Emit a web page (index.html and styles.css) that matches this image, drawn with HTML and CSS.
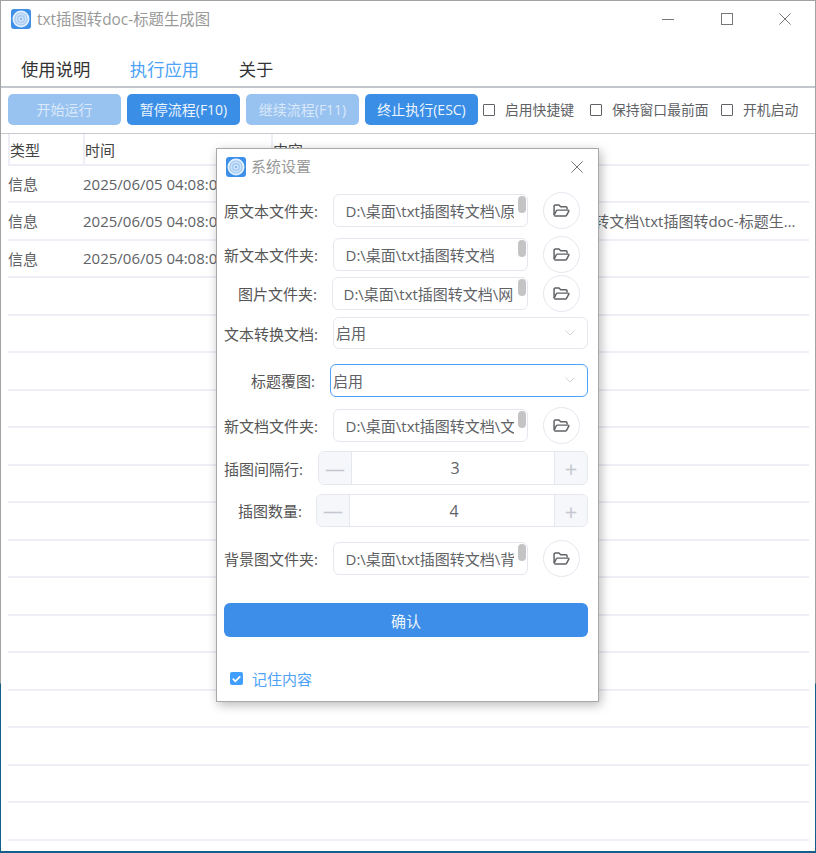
FILE: index.html
```html
<!DOCTYPE html>
<html lang="zh-CN">
<head>
<meta charset="utf-8">
<title>txt插图转doc-标题生成图</title>
<link rel="stylesheet" href="styles.css">
</head>
<body>
<svg class="defs" width="0" height="0" aria-hidden="true">
  <symbol id="logo" viewBox="0 0 20 20">
    <rect width="20" height="20" rx="3" fill="#3d8fe8"/>
    <circle cx="10" cy="10" r="8.5" fill="#e3f0fd"/>
    <circle cx="10" cy="10" r="6.8" fill="#a9cdf3"/>
    <circle cx="10" cy="10" r="5.4" fill="#cfe2f9"/>
    <circle cx="10" cy="10" r="4" fill="#a3c9f3"/>
    <circle cx="10" cy="10" r="2.6" fill="#d9e9fb"/>
    <circle cx="10" cy="10" r="1.2" fill="#7fb5f0"/>
  </symbol>
  <symbol id="folder" viewBox="0 0 18 14">
    <path d="M1 12.2V2.4C1 1.6 1.6 1 2.4 1h3.8l2 2h5.4c.8 0 1.4.6 1.4 1.4V6" fill="none" stroke="#606266" stroke-width="1.6"/>
    <path d="M1.3 13h11.9c.5 0 1-.3 1.2-.7L16.9 7.6c.2-.5-.1-1-.7-1H4.6c-.5 0-1 .3-1.2.7L1 12.2" fill="none" stroke="#606266" stroke-width="1.6" stroke-linejoin="round"/>
  </symbol>
  <symbol id="chev" viewBox="0 0 10 6">
    <path d="M.5.5L5 5 9.5.5" fill="none" stroke="#d3d5db" stroke-width="1"/>
  </symbol>
  <symbol id="cross" viewBox="0 0 12 12">
    <path d="M.4.4l11.2 11.2M11.6.4L.4 11.6" fill="none" stroke="#777" stroke-width="1"/>
  </symbol>
</svg>

<div class="window">
  <header class="titlebar">
    <svg class="logo"><use href="#logo"/></svg>
    <span class="app-title">txt插图转doc-标题生成图</span>
    <div class="win-controls">
      <span class="win-btn"><i class="win-min"></i></span>
      <span class="win-btn"><i class="win-max"></i></span>
      <span class="win-btn"><svg class="icon-x"><use href="#cross"/></svg></span>
    </div>
  </header>

  <nav class="tabs">
    <a class="tab">使用说明</a>
    <a class="tab tab-active">执行应用</a>
    <a class="tab">关于</a>
  </nav>

  <div class="toolbar">
    <button class="btn btn-off">开始运行</button>
    <button class="btn">暂停流程(F10)</button>
    <button class="btn btn-off">继续流程(F11)</button>
    <button class="btn">终止执行(ESC)</button>
    <label class="tool-check tc-a"><i class="box"></i>启用快捷键</label>
    <label class="tool-check tc-b"><i class="box"></i>保持窗口最前面</label>
    <label class="tool-check tc-c"><i class="box"></i>开机启动</label>
  </div>

  <div class="table">
    <div class="thead">
      <div class="th th-type">类型</div>
      <div class="th th-time">时间</div>
      <div class="th th-text">内容</div>
    </div>
    <div class="tr"><span class="td-type">信息</span><span class="td-time">2025/06/05 04:08:09</span><span class="td-text">程序启动完成</span></div>
    <div class="tr"><span class="td-type">信息</span><span class="td-time">2025/06/05 04:08:09</span><span class="td-text">读取配置文件，当前运行目录：D:\桌面\txt插图转文档\txt插图转doc-标题生成图\config.json</span></div>
    <div class="tr"><span class="td-type">信息</span><span class="td-time">2025/06/05 04:08:09</span><span class="td-text">读取配置完成</span></div>
    <div class="tr"></div><div class="tr"></div><div class="tr"></div><div class="tr"></div><div class="tr"></div>
    <div class="tr"></div><div class="tr"></div><div class="tr"></div><div class="tr"></div><div class="tr"></div>
    <div class="tr"></div><div class="tr"></div><div class="tr"></div><div class="tr"></div><div class="tr"></div>
  </div>
</div>

<section class="dialog">
  <header class="dlg-head">
    <svg class="logo"><use href="#logo"/></svg>
    <span class="dlg-title">系统设置</span>
    <svg class="icon-x dlg-close"><use href="#cross"/></svg>
  </header>

  <div class="row">
    <label class="lab">原文本文件夹:</label>
    <div class="path"><span class="path-text">D:\桌面\txt插图转文档\原文本</span><i class="thumb"></i></div>
    <button class="pick"><svg class="icon-folder"><use href="#folder"/></svg></button>
  </div>
  <div class="row mt-11">
    <label class="lab">新文本文件夹:</label>
    <div class="path"><span class="path-text">D:\桌面\txt插图转文档</span><i class="thumb"></i></div>
    <button class="pick"><svg class="icon-folder"><use href="#folder"/></svg></button>
  </div>
  <div class="row mt-6">
    <label class="lab lab-img">图片文件夹:</label>
    <div class="path"><span class="path-text">D:\桌面\txt插图转文档\网络图片</span><i class="thumb"></i></div>
    <button class="pick"><svg class="icon-folder"><use href="#folder"/></svg></button>
  </div>
  <div class="row mt-7 row-32">
    <label class="lab">文本转换文档:</label>
    <div class="select"><span>启用</span><svg class="icon-chev"><use href="#chev"/></svg></div>
  </div>
  <div class="row mt-15">
    <label class="lab lab-cover">标题覆图:</label>
    <div class="select select-focus"><span>启用</span><svg class="icon-chev"><use href="#chev"/></svg></div>
  </div>
  <div class="row mt-12">
    <label class="lab">新文档文件夹:</label>
    <div class="path"><span class="path-text">D:\桌面\txt插图转文档\文档</span><i class="thumb"></i></div>
    <button class="pick"><svg class="icon-folder"><use href="#folder"/></svg></button>
  </div>
  <div class="row mt-9 row-34">
    <label class="lab lab-gap">插图间隔行:</label>
    <div class="stepper"><span class="step">—</span><span class="step-val">3</span><span class="step step-plus">+</span></div>
  </div>
  <div class="row mt-9">
    <label class="lab lab-count">插图数量:</label>
    <div class="stepper stepper-wide"><span class="step">—</span><span class="step-val">4</span><span class="step step-plus">+</span></div>
  </div>
  <div class="row mt-15">
    <label class="lab">背景图文件夹:</label>
    <div class="path"><span class="path-text">D:\桌面\txt插图转文档\背景图</span><i class="thumb"></i></div>
    <button class="pick"><svg class="icon-folder"><use href="#folder"/></svg></button>
  </div>

  <button class="confirm">确认</button>

  <label class="remember">
    <i class="checked"><svg viewBox="0 0 14 14" class="icon-check"><path d="M3 7.2l2.8 2.8L11 4.6" fill="none" stroke="#fff" stroke-width="2"/></svg></i>记住内容
  </label>
</section>
</body>
</html>
```

FILE: styles.css
```css
* { box-sizing: border-box; }

html, body { margin: 0; height: 100%; }

body {
  position: relative;
  overflow: hidden;
  padding: 1px 1px 2px 1px;
  background: linear-gradient(#a3a3a3 0, #a3a3a3 683px, #12608a 684px, #12608a 100%);
  font-family: "Open Sans", "Noto Sans CJK SC", sans-serif;
  font-size: 15px;
  color: #606266;
}

.defs { position: absolute; }

i { display: block; font-style: normal; }

.window {
  height: 100%;
  background: #fff;
  display: flex;
  flex-direction: column;
  overflow: hidden;
}

/* title bar */
.titlebar {
  flex: 0 0 39px;
  display: flex;
  align-items: center;
  padding: 0 0 3px 10px;
}

.logo { width: 20px; height: 20px; flex: none; }

.app-title {
  margin-left: 6px;
  padding-bottom: 2px;
  font-size: 15.4px;
  color: #999;
  white-space: nowrap;
}

.win-controls {
  margin-left: auto;
  display: flex;
  margin-right: 24px;
  gap: 46.5px;
  align-items: center;
}

.win-btn { width: 12px; height: 12px; display: flex; align-items: center; }
.win-min { width: 12px; height: 1px; background: #777; }
.win-max { width: 12px; height: 12px; border: 1px solid #777; }
.icon-x { width: 12px; height: 12px; display: block; }

/* tabs */
.tabs {
  flex: 0 0 48px;
  display: flex;
  align-items: center;
  gap: 39.5px;
  padding: 10px 0 0 20px;
  border-bottom: 2px solid #c4c6ce;
  font-size: 17.33px;
  color: #333;
}

.tab-active { color: #4ea2f7; }

/* toolbar */
.toolbar {
  flex: 0 0 46px;
  display: flex;
  align-items: center;
  padding: 0 0 2px 7px;
  gap: 6px;
  border-bottom: 1px solid #c8cad0;
}

.btn {
  width: 113px;
  height: 31px;
  padding: 0 0 2px;
  border: 1px solid #409eff00;
  border-radius: 5px;
  background: #3a8ee6;
  color: #eef5fd;
  font: inherit;
  font-size: 14px;
}

.btn-off { background: #98c2f0; color: #d9e8fa; }

.tool-check {
  display: flex;
  align-items: center;
  padding-bottom: 2px;
  font-size: 13.8px;
  color: #606266;
  white-space: nowrap;
}

.tc-a { margin-left: -1px; }
.tc-b { margin-left: 10px; }
.tc-c { margin-left: 6.5px; }

.box {
  width: 12px;
  height: 12px;
  margin: 3px 10px 0 0;
  border: 1.5px solid #5f6266;
  border-radius: 1px;
}

/* table */
.table {
  flex: 1;
  margin: 0 6px 0 7px;
  overflow: hidden;
}

.thead {
  height: 32px;
  display: flex;
  border-bottom: 2px solid #edeef6;
  color: #444;
}

.th {
  display: flex;
  align-items: center;
  padding-top: 1px;
  border-left: 2px solid #edeef6;
}

.th-type { width: 75px; }
.th-time { width: 188px; }
.th-text { flex: 1; }

.tr {
  height: 37.5px;
  display: flex;
  align-items: center;
  border-bottom: 2px solid #edeef6;
  white-space: nowrap;
}

.tr:nth-child(2) { height: 37px; }

.td-type { width: 75px; flex: none; }
.td-time { width: 189px; flex: none; }
.td-text {
  flex: 1;
  min-width: 0;
  padding: 0 4px 0 8px;
  overflow: hidden;
  text-overflow: ellipsis;
}

/* dialog */
.dialog {
  position: absolute;
  left: 216px;
  top: 148px;
  width: 383px;
  height: 554px;
  padding: 0 10px 0 7px;
  background: #fff;
  border: 1px solid #a8a8a8;
  box-shadow: 2px 3px 10px rgba(0, 0, 0, .28);
}

.dlg-head {
  height: 45px;
  display: flex;
  align-items: center;
  padding: 0 0 10px 2px;
}

.dlg-title { margin-left: 5px; padding-bottom: 2px; color: #999; }
.dlg-close { margin-left: auto; margin-right: 5px; }

.row { display: flex; align-items: center; height: 33px; }
.row-32 { height: 32px; }
.row-34 { height: 34px; }

.mt-6 { margin-top: 6px; }
.mt-7 { margin-top: 7px; }
.mt-9 { margin-top: 9px; }
.mt-11 { margin-top: 11px; }
.mt-12 { margin-top: 12px; }
.mt-15 { margin-top: 15px; }

.lab {
  flex: 0 0 109px;
  white-space: nowrap;
  color: #555;
}

.lab-img { flex-basis: 108px; padding-left: 14px; }
.lab-cover { flex-basis: 106px; padding-left: 27px; }
.lab-gap { flex-basis: 94px; }
.lab-count { flex-basis: 92px; padding-left: 14px; }

.path {
  position: relative;
  flex: 1;
  max-width: 195px;
  height: 100%;
  padding: 0 13px 0 11.5px;
  display: flex;
  align-items: center;
  border: 1.5px solid #e4e7ed;
  border-radius: 6px;
  overflow: hidden;
}

.lab-img + .path { max-width: 196px; padding: 0 14.5px 0 10.5px; }

.path-text { white-space: nowrap; overflow: hidden; }

.thumb {
  position: absolute;
  right: 1px;
  top: 1px;
  width: 8px;
  height: 17px;
  border-radius: 4px;
  background: #c4c4c4;
}

.pick {
  flex: none;
  width: 37px;
  height: 37px;
  margin: -2px 0 -2px 15px;
  padding: 0;
  display: flex;
  align-items: center;
  justify-content: center;
  background: #fff;
  border: 1.5px solid #e4e7ed;
  border-radius: 50%;
}

.icon-folder { width: 17px; height: 13px; display: block; }

.select {
  flex: 1;
  height: 100%;
  padding: 0 12px 1px 2px;
  display: flex;
  align-items: center;
  justify-content: space-between;
  border: 1.5px solid #e4e7ed;
  border-radius: 6px;
}

.select-focus { border-color: #4ea2f7; }

.icon-chev { width: 10px; height: 6px; display: block; }

.stepper {
  flex: 1;
  height: 100%;
  display: flex;
  border: 1.5px solid #e4e7ed;
  border-radius: 6px;
  overflow: hidden;
}

.step {
  flex: 0 0 33px;
  display: flex;
  align-items: center;
  justify-content: center;
  background: #f5f7fa;
  border-right: 1.5px solid #e4e7ed;
  color: #c4c7cf;
  font-size: 20px;
}

.step-plus {
  border-right: 0;
  border-left: 1.5px solid #e4e7ed;
  font-size: 22px;
}

.step-val {
  flex: 1;
  display: flex;
  align-items: center;
  justify-content: center;
  padding-left: 4px;
  font-size: 16px;
}

.confirm {
  display: block;
  width: 100%;
  height: 34px;
  margin-top: 28px;
  padding: 0;
  border: 0;
  border-radius: 6px;
  background: #3c8ee8;
  color: #eef5fd;
  font: inherit;
}

.remember {
  margin: 31px 0 0 6px;
  height: 20px;
  display: flex;
  align-items: center;
  color: #4ea2f7;
}

.checked {
  width: 13px;
  height: 13px;
  margin-right: 9px;
  border-radius: 2px;
  background: #409eff;
}

.icon-check { width: 13px; height: 13px; display: block; }
```
